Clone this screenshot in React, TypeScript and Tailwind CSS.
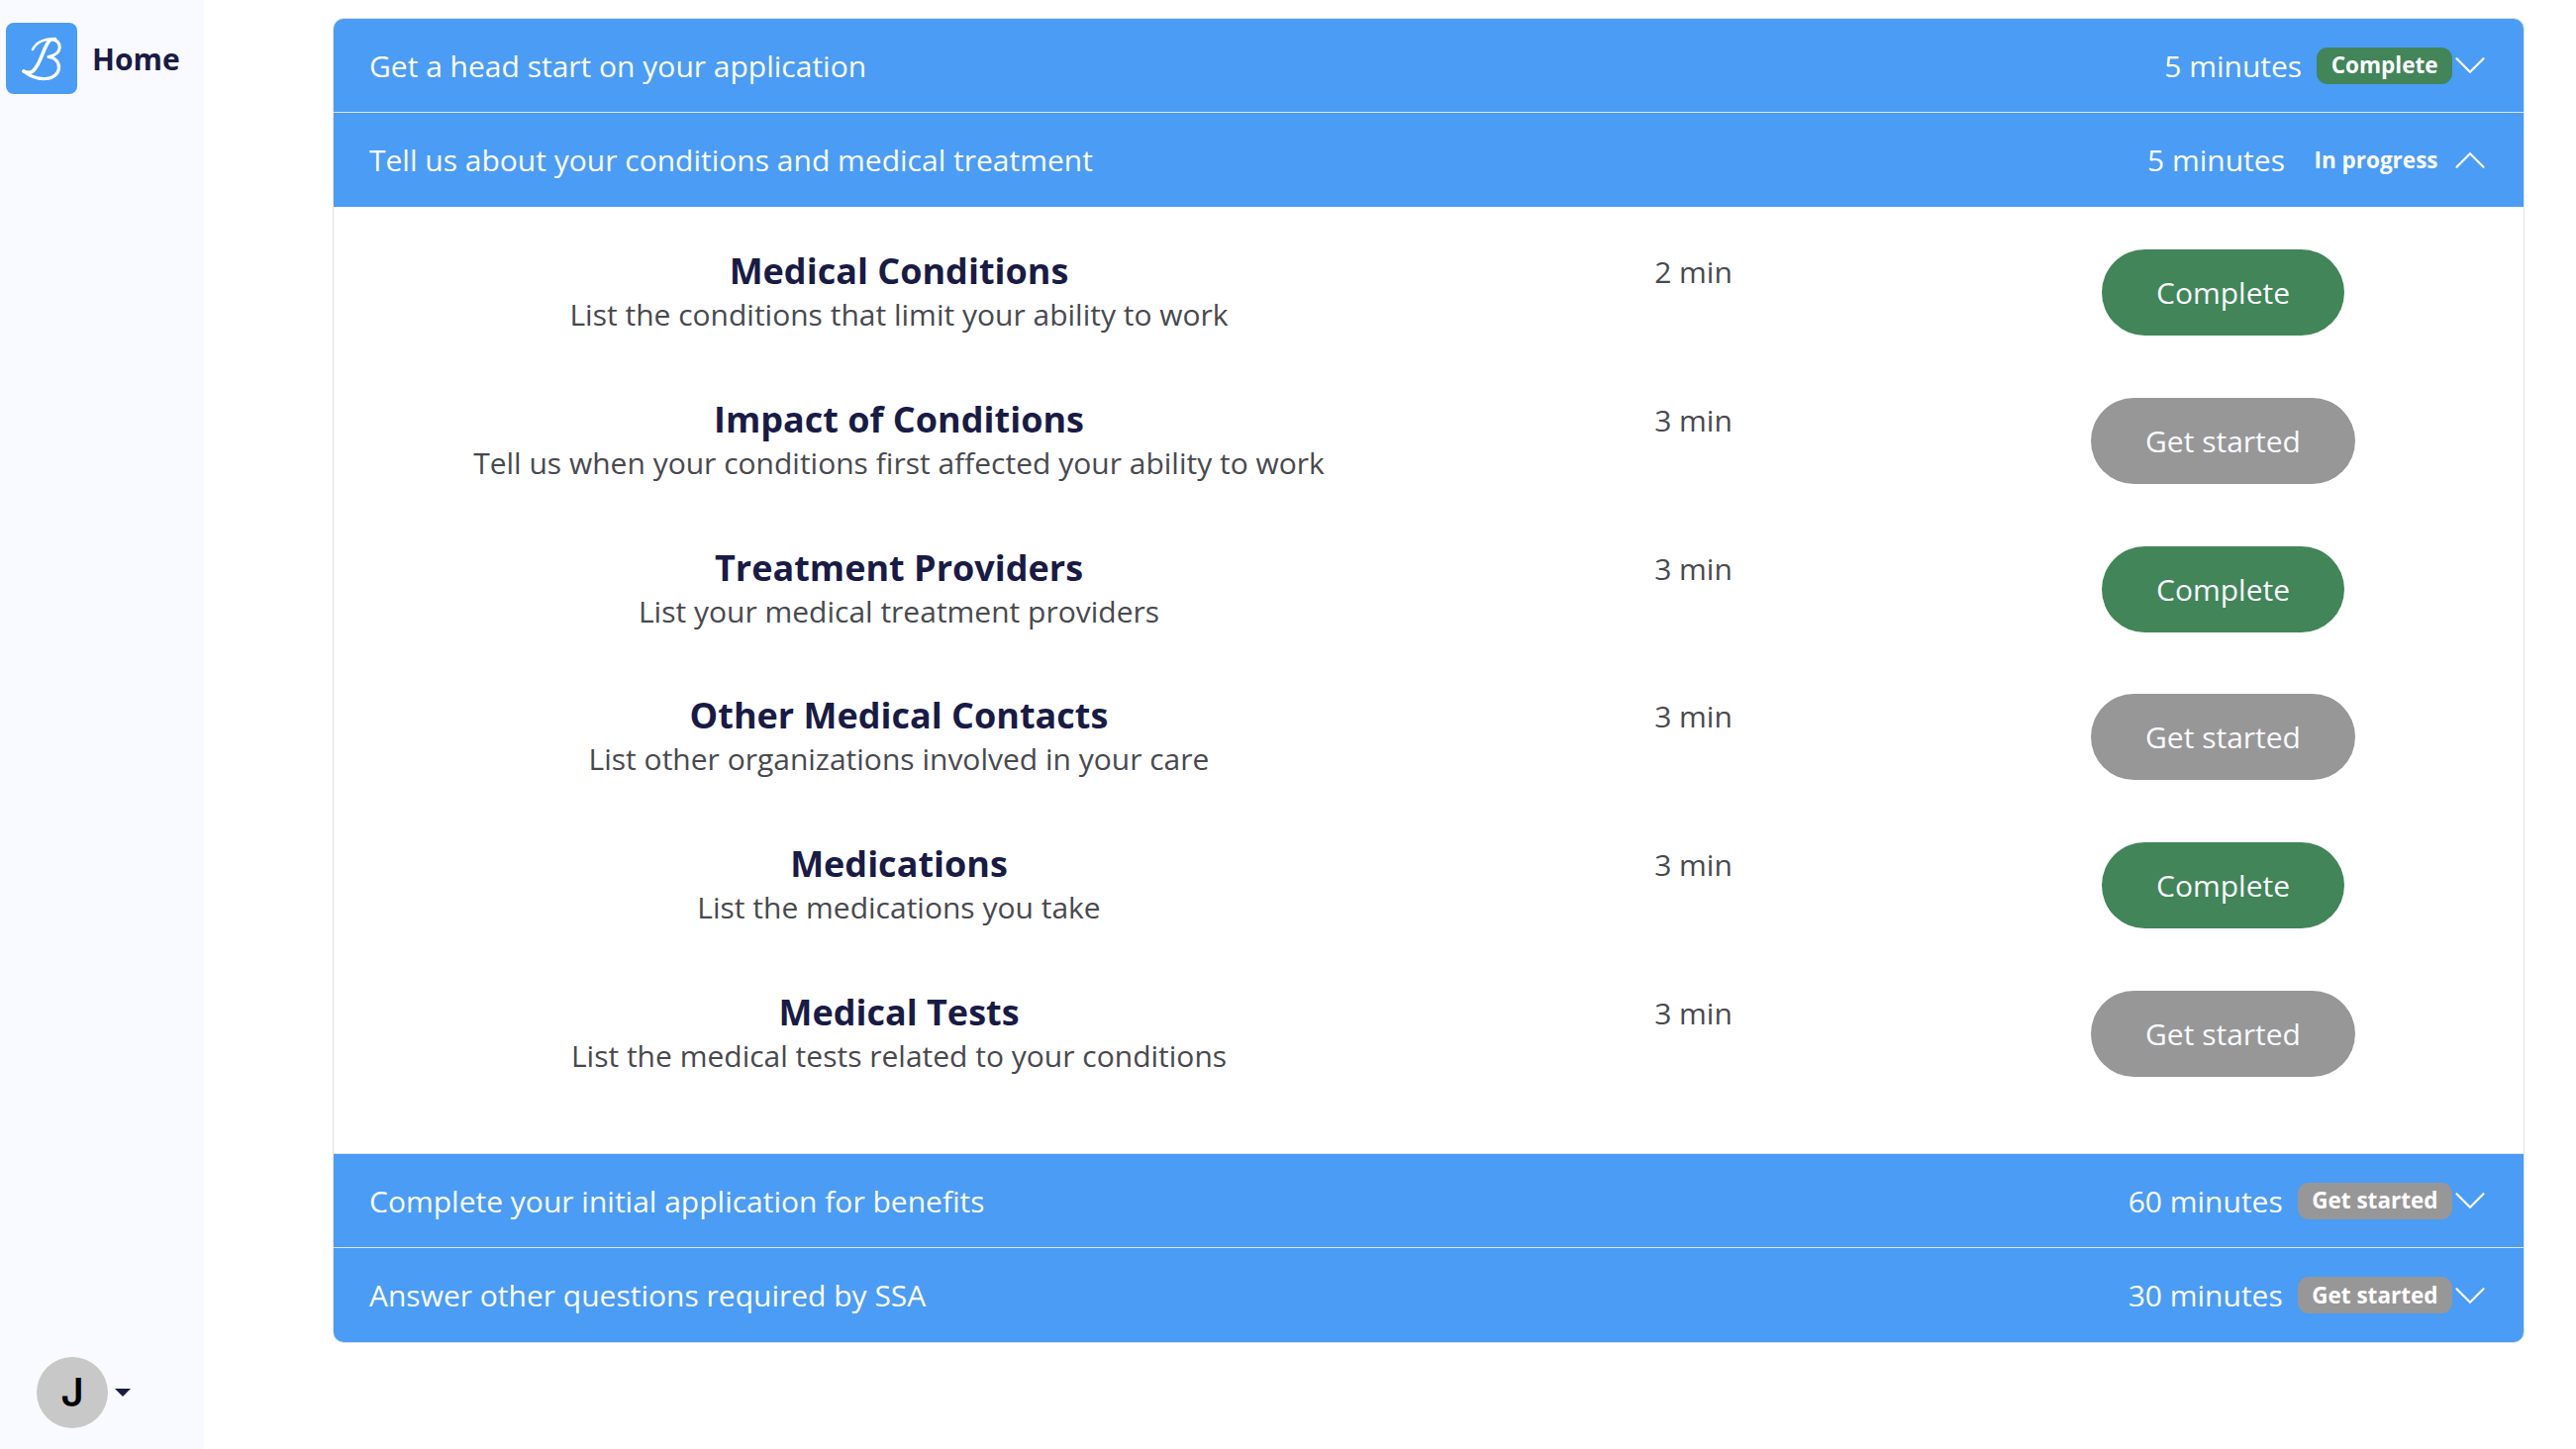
type Status = 'Complete' | 'In progress' | 'Get started';

interface ISection {
  title: string;
  time: string;
  status: Status;
}

interface ITask {
  title: string;
  description: string;
  time: string;
  status: Status;
}

const tasks: ITask[] = [
  {
    title: 'Medical Conditions',
    description: 'List the conditions that limit your ability to work',
    time: '2 min',
    status: 'Complete',
  },
  {
    title: 'Impact of Conditions',
    description: 'Tell us when your conditions first affected your ability to work',
    time: '3 min',
    status: 'Get started',
  },
  {
    title: 'Treatment Providers',
    description: 'List your medical treatment providers',
    time: '3 min',
    status: 'Complete',
  },
  {
    title: 'Other Medical Contacts',
    description: 'List other organizations involved in your care',
    time: '3 min',
    status: 'Get started',
  },
  {
    title: 'Medications',
    description: 'List the medications you take',
    time: '3 min',
    status: 'Complete',
  },
  {
    title: 'Medical Tests',
    description: 'List the medical tests related to your conditions',
    time: '3 min',
    status: 'Get started',
  },
];

const statusColors: Record<Status, string> = {
  Complete: 'bg-[#418558]',
  'In progress': 'bg-[#4b9cf5]',
  'Get started': 'bg-[#979797]',
};

const Chevron = ({ open }: { open?: boolean }) => (
  <svg
    viewBox="0 0 16 16"
    fill="white"
    className={`size-9 shrink-0 ${open ? 'rotate-180' : ''}`}
  >
    <path
      fillRule="evenodd"
      d="M1.646 4.646a.5.5 0 0 1 .708 0L8 10.293l5.646-5.647a.5.5 0 0 1 .708.708l-6 6a.5.5 0 0 1-.708 0l-6-6a.5.5 0 0 1 0-.708z"
    />
  </svg>
);

const SectionHeader = ({ section, open }: { section: ISection; open?: boolean }) => (
  <button className="flex w-full h-[95px] items-center bg-[#4b9cf5] pl-9 pr-9 text-left text-[30px] text-white">
    <span className="flex-grow">{section.title}</span>
    <span className="mr-[15px]">{section.time}</span>
    <span
      className={`flex h-[37px] items-center rounded-[11px] px-[14.5px] text-[22.5px] font-bold ${
        statusColors[section.status]
      }`}
    >
      {section.status}
    </span>
    <Chevron open={open} />
  </button>
);

const TaskRow = ({ task }: { task: ITask }) => (
  <div className="grid h-[149.8px] grid-cols-4 text-center text-[30px] text-[#48494e]">
    <div className="col-span-2">
      <h5 className="text-[36px] leading-[43px] font-bold text-[#191b45]">{task.title}</h5>
      <p className="leading-[45px]">{task.description}</p>
    </div>
    <div className="leading-[45px]">{task.time}</div>
    <div>
      <button
        className={`h-[87px] rounded-full px-[55px] text-[#f9faff] ${statusColors[task.status]}`}
      >
        {task.status}
      </button>
    </div>
  </div>
);

const Logo = () => (
  <div className="size-[72px] rounded-lg bg-[#4b9cf5]">
    <svg viewBox="0 0 72 72" fill="none" stroke="white" strokeLinecap="round" strokeLinejoin="round">
      <path d="M27 27C31 19 40 16 50 16" strokeWidth="2.6" />
      <path d="M45 17C38 22 36 42 27 49C24 51 20 50 18 49" strokeWidth="3.6" />
      <path d="M46 17C57 17 58 32 43 34.500C58 36 57 56 40 56.500C31 57 23 53 18 49" strokeWidth="3.2" />
    </svg>
  </div>
);

const Sidebar = () => (
  <nav className="flex w-[206px] shrink-0 flex-col justify-between bg-[#f9faff] pt-[23px] pb-[21px]">
    <a className="flex items-center gap-[15px] pl-[6px]">
      <Logo />
      <span className="text-[30px] font-bold text-[#191b45]">Home</span>
    </a>
    <div className="flex items-center gap-[7px] pl-[37px]">
      <div className="flex size-[72px] items-center justify-center rounded-full bg-[#c8c8c8] font-[Inter] text-[40px] font-semibold text-black">
        J
      </div>
      <svg viewBox="0 0 16 8" className="w-4 h-2" fill="#191b45">
        <path d="M0 0h16L8 8z" />
      </svg>
    </div>
  </nav>
);

const App = () => (
  <div className="flex h-screen bg-white font-['Open_Sans',sans-serif]">
    <Sidebar />
    <main className="flex-grow pt-[18px] pr-[52px] pl-[130px]">
      <div className="overflow-hidden rounded-[11px] border border-[#dee2e6] divide-y divide-[#dee2e6]">
        <SectionHeader
          section={{
            title: 'Get a head start on your application',
            time: '5 minutes',
            status: 'Complete',
          }}
        />
        <div>
          <SectionHeader
            section={{
              title: 'Tell us about your conditions and medical treatment',
              time: '5 minutes',
              status: 'In progress',
            }}
            open
          />
          <div className="h-[956px] px-9 pt-[43px]">
            {tasks.map((task) => (
              <TaskRow key={task.title} task={task} />
            ))}
          </div>
        </div>
        <SectionHeader
          section={{
            title: 'Complete your initial application for benefits',
            time: '60 minutes',
            status: 'Get started',
          }}
        />
        <SectionHeader
          section={{
            title: 'Answer other questions required by SSA',
            time: '30 minutes',
            status: 'Get started',
          }}
        />
      </div>
    </main>
  </div>
);

export default App;
